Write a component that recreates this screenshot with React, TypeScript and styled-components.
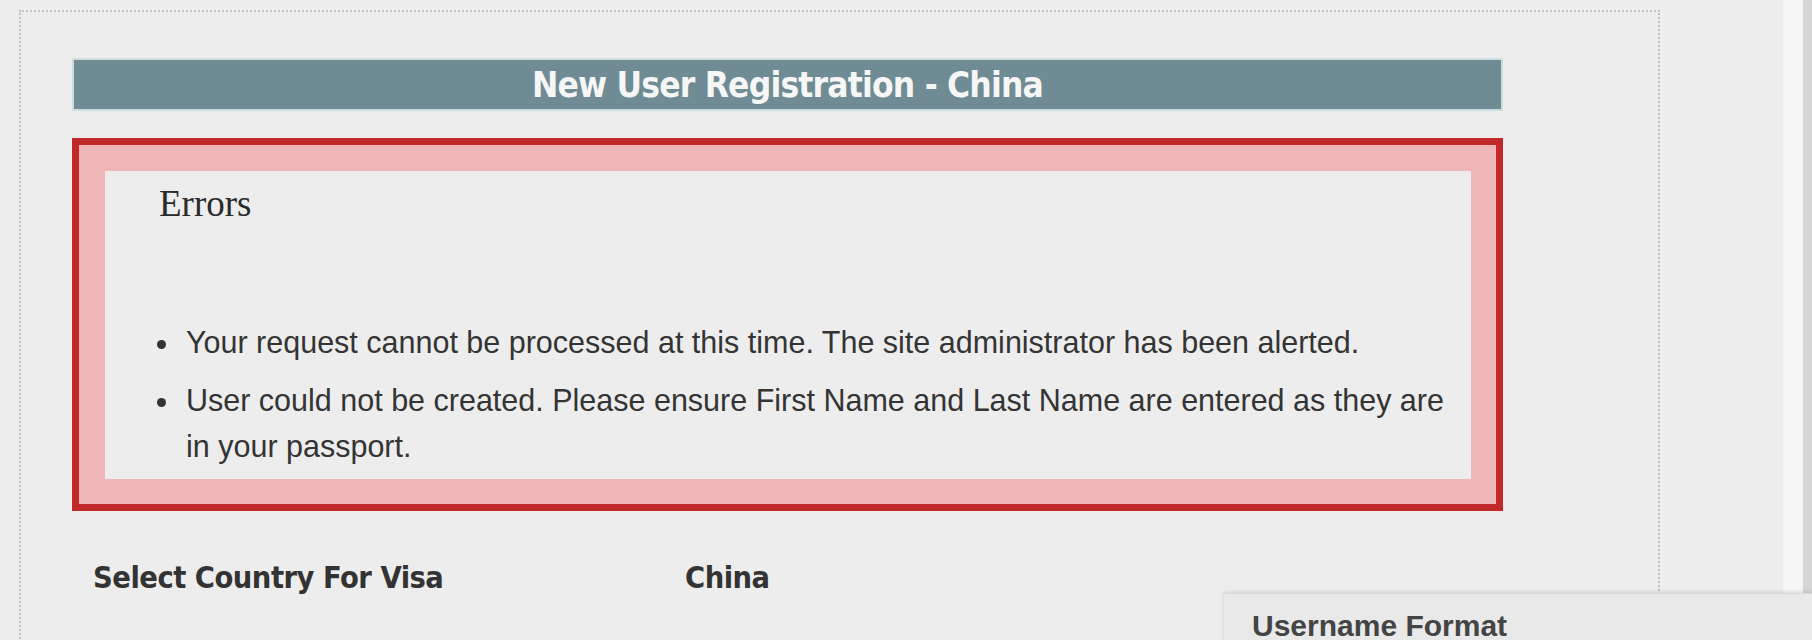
import styled, { createGlobalStyle } from 'styled-components';

const errors = [
  'Your request cannot be processed at this time. The site administrator has been alerted.',
  'User could not be created. Please ensure First Name and Last Name are entered as they are in your passport.',
];

export default function App() {
  return (
    <>
      <GlobalStyle />
      <Page>
        <Main>
          <Frame>
            <Form>
              <TitleBar>New User Registration - China</TitleBar>
              <ErrorBox>
                <ErrorInner>
                  <ErrorTitle>Errors</ErrorTitle>
                  <ErrorList>
                    {errors.map((text) => (
                      <ErrorItem key={text}>
                        <Bullet />
                        <span>{text}</span>
                      </ErrorItem>
                    ))}
                  </ErrorList>
                </ErrorInner>
              </ErrorBox>
              <FieldRow>
                <FieldLabel>Select Country For Visa</FieldLabel>
                <FieldLabel>China</FieldLabel>
              </FieldRow>
            </Form>
          </Frame>
        </Main>
        <ScrollTrack />
        <HelpPanel>
          <HelpTitle>Username Format</HelpTitle>
        </HelpPanel>
      </Page>
    </>
  );
}

const GlobalStyle = createGlobalStyle`
  body {
    margin: 0;
    background: #ededed;
    font-family: "Liberation Sans", Arial, sans-serif;
  }
`;

const Page = styled.div`
  position: relative;
  display: flex;
  height: 640px;
  overflow: hidden;
  background: #ededed;
`;

const Main = styled.div`
  flex: 1;
  padding: 10px 0 0 19px;
`;

const Frame = styled.div`
  width: 1637px;
  min-height: 700px;
  border: 2px dotted #c2c2c2;
`;

const Form = styled.div`
  width: 1431px;
  padding: 46px 0 0 51px;
`;

const TitleBar = styled.div`
  height: 49px;
  border: 2px solid #cddcdc;
  background: #6f8b93;
  color: #f6f6f6;
  text-align: center;
  font-family: "DejaVu Sans Condensed", "DejaVu Sans", sans-serif;
  font-stretch: condensed;
  font-weight: bold;
  font-size: 35px;
  letter-spacing: -0.8px;
  line-height: 51px;
`;

const ErrorBox = styled.div`
  margin-top: 27px;
  border: 7px solid #c0282a;
  background: #eeb6b6;
  padding: 26px 25px 25px 26px;
`;

const ErrorInner = styled.div`
  background: #ededed;
  padding: 11px 20px 10px 52px;
`;

const ErrorTitle = styled.h3`
  margin: 0 0 0 2px;
  font-family: "Liberation Serif", "Times New Roman", serif;
  font-weight: normal;
  font-size: 37px;
  color: #2b2b2b;
`;

const ErrorList = styled.ul`
  margin: 94px 0 0;
  padding: 0;
  list-style: none;
`;

const ErrorItem = styled.li`
  display: flex;
  gap: 20px;
  font-size: 30.5px;
  line-height: 46px;
  color: #343434;

  & + & {
    margin-top: 12px;
  }
`;

const Bullet = styled.span`
  flex: none;
  width: 9px;
  height: 9px;
  margin-top: 21px;
  border-radius: 50%;
  background: #333;
`;

const FieldRow = styled.div`
  display: grid;
  grid-template-columns: 592px auto;
  margin-top: 49px;
  padding-left: 21px;
`;

const FieldLabel = styled.div`
  font-family: "DejaVu Sans Condensed", "DejaVu Sans", sans-serif;
  font-stretch: condensed;
  font-weight: bold;
  font-size: 30.5px;
  letter-spacing: -0.5px;
  color: #333;
`;

const ScrollTrack = styled.div`
  flex: none;
  width: 20px;
  background: #f6f6f6;
  border-right: 9px solid #d5d5d5;
`;

const HelpPanel = styled.div`
  position: absolute;
  left: 1224px;
  top: 593px;
  width: 640px;
  height: 120px;
  background: #e9e9e9;
  border-top: 1px solid #d9d9d9;
  box-shadow: 0 -1px 4px rgba(0, 0, 0, 0.12);
`;

const HelpTitle = styled.div`
  padding: 15px 28px 0;
  font-weight: bold;
  font-size: 30px;
  color: #444;
`;
